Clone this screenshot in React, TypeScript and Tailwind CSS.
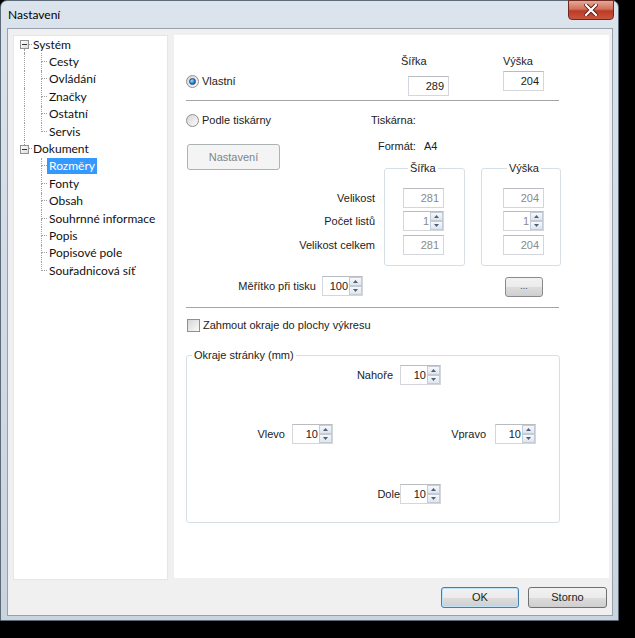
import React from 'react'

const sysItems = ['Cesty', 'Ovládání', 'Značky', 'Ostatní', 'Servis']
const docItems = ['Rozměry', 'Fonty', 'Obsah', 'Souhrnné informace', 'Popis', 'Popisové pole', 'Souřadnicová síť']

const dot = 'border-dotted border-[#a0a0a0]'
const btnGrad = 'bg-[linear-gradient(#f2f2f2,#ebebeb_50%,#dddddd_50%,#cfcfcf)]'

const Expander = () => (
  <div className="w-[9px] h-[9px] border border-[#919191] bg-linear-to-br from-white to-[#dcdcdc] flex items-center justify-center">
    <div className="w-[5px] h-px bg-[#333]" />
  </div>
)

const RootRow = ({ label, first }: { label: string; first: boolean }) => (
  <div className="flex h-[17.4px] items-stretch">
    <div className="w-[6px]" />
    <div className="w-[9px] flex flex-col">
      <div className={`flex-1 ml-[4px] ${first ? '' : `border-l ${dot}`}`} />
      <Expander />
      <div className={`flex-1 ml-[4px] ${first ? `border-l ${dot}` : ''}`} />
    </div>
    <div className="w-[3px] flex flex-col">
      <div className={`h-1/2 border-b ${dot}`} />
    </div>
    <span className="pl-[1px] self-center leading-[16px]">{label}</span>
  </div>
)

const ChildRow = ({ label, rootLine, last, selected }: { label: string; rootLine: boolean; last: boolean; selected?: boolean }) => (
  <div className="flex h-[17.4px] items-stretch">
    <div className="w-[10px]" />
    <div className={`w-[17px] ${rootLine ? `border-l ${dot}` : ''}`} />
    <div className="w-[6px] flex flex-col">
      <div className={`h-1/2 border-l border-b ${dot}`} />
      <div className={`flex-1 ${last ? '' : `border-l ${dot}`}`} />
    </div>
    <span
      className={`self-center px-[2px] h-[16px] leading-[16px] ${selected ? 'bg-[#3399ff] text-white' : ''}`}
    >
      {label}
    </span>
  </div>
)

const Radio = ({ checked }: { checked?: boolean }) => (
  <span className="w-[13px] h-[13px] rounded-full border border-[#8e8f8f] bg-linear-to-br from-[#d6d6d6] to-[#fbfbfb] flex items-center justify-center shrink-0">
    {checked && (
      <span className="w-[7px] h-[7px] rounded-full border border-[#1b4e7e] bg-[radial-gradient(circle_at_35%_35%,#a8e4ff,#2a7fd0_55%,#0f3f73)]" />
    )}
  </span>
)

const TextBox = ({ value, disabled, className = '' }: { value: string; disabled?: boolean; className?: string }) => (
  <div
    className={`w-[41px] h-[20px] border border-[#d3d6da] border-t-[#b9bdc2] bg-white text-right pr-[4px] leading-[18px] ${
      disabled ? 'text-[#8a8a8a]' : 'text-[#222]'
    } ${className}`}
  >
    {value}
  </div>
)

const Arrow = ({ up }: { up?: boolean }) => (
  <svg width="5" height="3" viewBox="0 0 5 3">
    <path d={up ? 'M0 3 L2.5 0 L5 3 Z' : 'M0 0 L2.5 3 L5 0 Z'} fill="#4d5f7a" />
  </svg>
)

const Spin = ({ value, disabled, className = '' }: { value: string; disabled?: boolean; className?: string }) => (
  <div className={`w-[41px] h-[20px] border border-[#d3d6da] border-t-[#b9bdc2] bg-white flex shrink-0 ${className}`}>
    <span className={`flex-1 text-right pr-[1px] leading-[18px] ${disabled ? 'text-[#8a8a8a]' : 'text-[#222]'}`}>{value}</span>
    <div className="w-[13px] flex flex-col">
      <div className="h-[9px] border border-[#c3ccd6] bg-linear-to-b from-[#f7f9fb] to-[#dfe5ec] flex items-center justify-center">
        <Arrow up />
      </div>
      <div className="h-[9px] border border-[#c3ccd6] bg-linear-to-b from-[#f7f9fb] to-[#dfe5ec] flex items-center justify-center">
        <Arrow />
      </div>
    </div>
  </div>
)

const Separator = ({ className = '' }: { className?: string }) => (
  <div className={`w-[373px] h-[2px] border-t border-[#a5a5a5] border-b border-b-white ${className}`} />
)

const App: React.FC = () => {
  return (
    <div className="w-[635px] h-[638px] bg-black overflow-hidden">
      <div className="w-[619px] h-[621px] rounded-t-[7px] border border-[#5d6b79] bg-linear-to-b from-[#dbe3ec] to-[#c9d4df] flex flex-col">
        {/* title bar */}
        <div className="h-[27px] flex shrink-0">
          <span className="self-center pl-[7px] pt-[1px] text-[12px] text-black font-['Lato',sans-serif]">Nastavení</span>
          <div className="ml-auto mr-[4px] -mt-px w-[46px] h-[20px] rounded-b-[4px] border border-[#6e2a22] bg-[linear-gradient(#e6a898,#d0705c_45%,#bd3a26_55%,#c9553f)] flex items-center justify-center">
            <svg width="14" height="12" viewBox="0 0 14 12">
              <path d="M2 1 L12 11 M12 1 L2 11" stroke="#5a1a12" strokeWidth="4" strokeLinecap="square" />
              <path d="M2 1 L12 11 M12 1 L2 11" stroke="#ffffff" strokeWidth="2.2" strokeLinecap="square" />
            </svg>
          </div>
        </div>

        {/* client */}
        <div className="ml-[6px] w-[606px] h-[588px] border border-[#96a1ad] bg-[#f0f0f0] flex flex-col">
          <div className="flex pt-[6px] pl-[5px] gap-[6px]">
            {/* tree */}
            <div className="w-[155px] h-[545px] bg-white border border-[#e6e6e6] text-[12px] text-[#111] font-['Lato',sans-serif]">
              <RootRow label="Systém" first />
              {sysItems.map((s) => (
                <ChildRow key={s} label={s} rootLine last={s === 'Servis'} />
              ))}
              <RootRow label="Dokument" first={false} />
              {docItems.map((s, i) => (
                <ChildRow key={s} label={s} rootLine={false} last={i === docItems.length - 1} selected={s === 'Rozměry'} />
              ))}
            </div>

            {/* right page */}
            <div className="w-[435px] h-[543px] bg-white pl-[12px] text-[11px] text-[#222] font-['Liberation_Sans',Arial,sans-serif]">
              <div className="flex mt-[20px] h-[41px]">
                <div className="w-[215px] mt-[20px] h-[13px] flex items-center gap-[3px]">
                  <Radio checked />
                  <span className="leading-[13px]">Vlastní</span>
                </div>
                <div className="w-[48px]">
                  <div className="h-[13px] leading-[13px]">Šířka</div>
                  <TextBox value="289" className="ml-[7px] mt-[8px]" />
                </div>
                <div className="ml-[54px]">
                  <div className="h-[13px] leading-[13px]">Výška</div>
                  <TextBox value="204" className="mt-[3px]" />
                </div>
              </div>

              <Separator className="mt-[4px]" />

              <div className="flex mt-[12px] h-[13px] items-center">
                <div className="w-[185px] flex items-center gap-[3px]">
                  <Radio />
                  <span className="leading-[13px]">Podle tiskárny</span>
                </div>
                <span className="leading-[13px]">Tiskárna:</span>
              </div>

              <div className="flex mt-[12px]">
                <div className="w-[198px] pr-[9px]">
                  <div className="ml-[1px] mt-[5px] w-[93px] h-[26px] rounded-[3px] border border-[#adb2b5] bg-[#f4f4f4] text-[#838383] flex items-center justify-center">
                    Nastavení
                  </div>
                  <div className="mt-[18px] flex flex-col items-end">
                    <div className="h-[20px] flex items-center">Velikost</div>
                    <div className="h-[20px] mt-[3px] flex items-center">Počet listů</div>
                    <div className="h-[20px] mt-[4px] flex items-center">Velikost celkem</div>
                  </div>
                  <div className="mt-[21px] flex items-center">
                    <span className="w-[130px] text-right">Měřítko při tisku</span>
                    <Spin value="100" className="ml-[6px]" />
                  </div>
                </div>

                <div>
                  <div className="-ml-[6px] h-[14px] leading-[14px] flex">
                    <span className="w-[46px]">Formát:</span>
                    <span>A4</span>
                  </div>
                  <div className="flex gap-[16px] mt-[9px]">
                    <fieldset className="w-[81px] border border-[#d5dfe5] rounded-[3px] pt-[13px] pb-[10px] pl-[18px]">
                      <legend className="ml-[5px] px-[2px] leading-[13px]">Šířka</legend>
                      <TextBox value="281" disabled />
                      <Spin value="1" disabled className="mt-[3px]" />
                      <TextBox value="281" disabled className="mt-[4px]" />
                    </fieldset>
                    <fieldset className="w-[80px] border border-[#d5dfe5] rounded-[3px] pt-[13px] pb-[10px] pl-[21px]">
                      <legend className="ml-[4px] px-[2px] leading-[13px]">Výška</legend>
                      <TextBox value="204" disabled />
                      <Spin value="1" disabled className="mt-[3px]" />
                      <TextBox value="204" disabled className="mt-[4px]" />
                    </fieldset>
                  </div>
                  <div className={`ml-[121px] mt-[11px] w-[38px] h-[20px] rounded-[3px] border border-[#8a8a8a] ${btnGrad} flex items-center justify-center text-[9px] text-[#444]`}>
                    ...
                  </div>
                </div>
              </div>

              <Separator className="mt-[10px]" />

              <div className="flex mt-[10px] h-[13px] items-center gap-[3px]">
                <span className="ml-[1px] w-[13px] h-[13px] border border-[#8e8f8f] bg-linear-to-br from-[#d6d6d6] to-[#fbfbfb] shrink-0" />
                <span className="leading-[13px]">Zahmout okraje do plochy výkresu</span>
              </div>

              <fieldset className="mt-[17px] w-[374px] border border-[#d5dfe5] rounded-[3px] pt-[3px] pb-[18px]">
                <legend className="ml-[5px] px-[2px] leading-[13px]">Okraje stránky (mm)</legend>
                <div className="flex items-center h-[20px]">
                  <span className="w-[206px] text-right">Nahoře</span>
                  <Spin value="10" className="ml-[7px]" />
                </div>
                <div className="flex items-center h-[20px] mt-[39px]">
                  <span className="w-[98px] text-right">Vlevo</span>
                  <Spin value="10" className="ml-[7px]" />
                  <span className="w-[153px] text-right">Vpravo</span>
                  <Spin value="10" className="ml-[9px]" />
                </div>
                <div className="flex items-center h-[20px] mt-[40px]">
                  <span className="w-[213px] text-right">Dole</span>
                  <Spin value="10" />
                </div>
              </fieldset>
            </div>
          </div>

          {/* buttons */}
          <div className="flex justify-end gap-[9px] pr-[5px] mt-[7px] text-[11px] text-[#222] font-['Liberation_Sans',Arial,sans-serif]">
            <div className={`w-[78px] h-[21px] rounded-[3px] border border-[#3c7fb1] shadow-[inset_0_0_0_1px_#bfe4f8] ${btnGrad} flex items-center justify-center`}>
              OK
            </div>
            <div className={`w-[79px] h-[21px] rounded-[3px] border border-[#707070] ${btnGrad} flex items-center justify-center`}>
              Storno
            </div>
          </div>
        </div>
      </div>
    </div>
  )
}

export default App
